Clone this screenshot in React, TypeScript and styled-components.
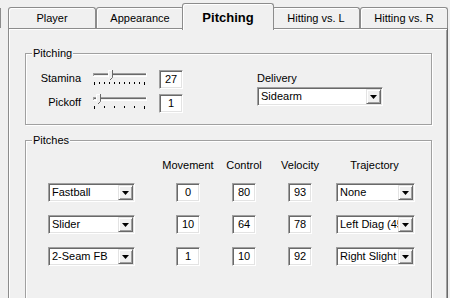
import styled, { createGlobalStyle } from "styled-components";

const GlobalStyle = createGlobalStyle`
  html, body {
    margin: 0;
    padding: 0;
    background: #f0f0f0;
  }
  body {
    font-family: "Liberation Sans", Arial, sans-serif;
    font-size: 11px;
    color: #000;
  }
  * {
    box-sizing: border-box;
  }
`;

const Window = styled.div`
  width: 450px;
  height: 298px;
  overflow: hidden;
  background: #f0f0f0;
`;

const TabStrip = styled.div`
  display: flex;
  align-items: flex-end;
  height: 30px;
`;

const Stub = styled.div`
  flex: none;
  width: 1px;
  height: 20px;
  margin: 0 7px 2px 0;
  background: #8c8c8c;
`;

const Tab = styled.div<{ $active?: boolean }>`
  position: relative;
  z-index: ${(p) => (p.$active ? 2 : 1)};
  flex: none;
  width: ${(p) => (p.$active ? 92 : 88)}px;
  height: ${(p) => (p.$active ? 27 : 21)}px;
  margin: 0 ${(p) => (p.$active ? -2 : 0)}px ${(p) => (p.$active ? 0 : 2)}px;
  padding-top: ${(p) => (p.$active ? 1 : 0)}px;
  display: flex;
  align-items: center;
  justify-content: center;
  border: 1px solid #8c8c8c;
  border-bottom: none;
  border-radius: 3px 3px 0 0;
  box-shadow: inset 1px 1px #fff;
  background: #f0f0f0;
  font-size: ${(p) => (p.$active ? 13 : 11)}px;
  font-weight: ${(p) => (p.$active ? "bold" : "normal")};
  white-space: nowrap;
`;

const Panel = styled.div`
  position: relative;
  z-index: 1;
  width: 440px;
  height: 272px;
  margin: -2px 0 0 8px;
  padding: 18px 15px 0 16px;
  display: flex;
  flex-direction: column;
  gap: 9px;
  border: 1px solid #8c8c8c;
  border-right-color: #696969;
  border-bottom: none;
  box-shadow: inset 1px 1px #fff, inset -1px 0 #a0a0a0;
`;

const Group = styled.fieldset<{ $fill?: boolean }>`
  margin: 0;
  padding: 0;
  min-width: 0;
  flex: ${(p) => (p.$fill ? "1" : "none")};
  border: 1px solid #a0a0a0;
  box-shadow: inset 1px 1px #fff, 1px 1px #fff;
`;

const Legend = styled.legend`
  margin-left: 6px;
  padding: 0 1px;
  line-height: 13px;
  background: #f0f0f0;
`;

const PitchingBody = styled.div`
  display: flex;
  align-items: flex-start;
  gap: 74px;
  padding: 10px 0 11px 0;
`;

const SliderGrid = styled.div`
  display: grid;
  grid-template-columns: 55px 54px 24px;
  grid-auto-rows: 19px;
  column-gap: 12px;
  row-gap: 5px;
  align-items: center;
`;

const SliderLabel = styled.div`
  text-align: right;
  line-height: 13px;
  margin-top: -2px;
`;

const TrackSvg = styled.svg`
  display: block;
  align-self: start;
`;

const NumBox = styled.div`
  width: 24px;
  height: 19px;
  line-height: 15px;
  padding-top: 1px;
  text-align: center;
  background: #fff;
  border: 1px solid;
  border-color: #a0a0a0 #fff #fff #a0a0a0;
  box-shadow: inset 1px 1px #696969, inset -1px -1px #e3e3e3;
`;

const DeliveryBlock = styled.div`
  display: flex;
  flex-direction: column;
  gap: 2px;
  padding-top: 2px;
`;

const FieldLabel = styled.div`
  line-height: 13px;
`;

const ComboBox = styled.div<{ $width: number }>`
  width: ${(p) => p.$width}px;
  height: 19px;
  display: flex;
  padding: 1px;
  background: #fff;
  border: 1px solid;
  border-color: #a0a0a0 #fff #fff #a0a0a0;
  box-shadow: inset 1px 1px #696969, inset -1px -1px #e3e3e3;
`;

const ComboText = styled.div`
  flex: 1;
  min-width: 0;
  padding-left: 2px;
  line-height: 15px;
  white-space: nowrap;
  overflow: hidden;
`;

const DropButton = styled.div`
  flex: none;
  width: 15px;
  height: 15px;
  display: flex;
  align-items: center;
  justify-content: center;
  background: #f0f0f0;
  border: 1px solid;
  border-color: #e3e3e3 #696969 #696969 #e3e3e3;
  box-shadow: inset 1px 1px #fff, inset -1px -1px #a0a0a0;
`;

const PitchTable = styled.div`
  display: flex;
  flex-direction: column;
  gap: 13px;
  padding: 12px 0 0 22px;
`;

const Columns = styled.div`
  display: grid;
  grid-template-columns: 112px 56px 56px 56px 87px;
  align-items: center;
  justify-items: center;
`;

const HeaderRow = styled(Columns)`
  line-height: 13px;
  margin-bottom: -2px;
`;

const TrajHeader = styled.div`
  padding-left: 6px;
`;

const StartCell = styled.div`
  justify-self: start;
`;

const EndCell = styled.div`
  justify-self: end;
`;

const tabs = ["Player", "Appearance", "Pitching", "Hitting vs. L", "Hitting vs. R"];

const pitches = [
  { pitch: "Fastball", movement: 0, control: 80, velocity: 93, trajectory: "None" },
  { pitch: "Slider", movement: 10, control: 64, velocity: 78, trajectory: "Left Diag (45)" },
  { pitch: "2-Seam FB", movement: 1, control: 10, velocity: 92, trajectory: "Right Slight" },
];

function Combo({ value, width }: { value: string; width: number }) {
  return (
    <ComboBox $width={width}>
      <ComboText>{value}</ComboText>
      <DropButton>
        <svg width="7" height="4" viewBox="0 0 7 4">
          <path d="M0 0h7L3.5 4z" fill="#000" />
        </svg>
      </DropButton>
    </ComboBox>
  );
}

function Trackbar({ ticks, thumb }: { ticks: number; thumb: number }) {
  const marks = Array.from({ length: ticks }, (_, i) => Math.round(1 + (i * 50) / (ticks - 1)));
  return (
    <TrackSvg width="54" height="16" viewBox="0 0 54 16">
      <rect x="0" y="3" width="54" height="1" fill="#a0a0a0" />
      <rect x="0" y="3" width="1" height="4" fill="#a0a0a0" />
      <rect x="1" y="4" width="52" height="1" fill="#696969" />
      <rect x="0" y="6" width="54" height="1" fill="#fff" />
      <rect x="53" y="3" width="1" height="4" fill="#fff" />
      {marks.map((x, i) => (
        <rect
          key={i}
          x={x}
          y="12"
          width="1"
          height={i === 0 || i === marks.length - 1 ? 3 : 2}
          fill="#000"
        />
      ))}
      <path
        d={`M${thumb - 2} 0h5v7l-2.5 3l-2.5 -3z`}
        fill="#f0f0f0"
      />
      <path
        d={`M${thumb - 1.5} 7.5V0.5h4`}
        fill="none"
        stroke="#fff"
      />
      <path
        d={`M${thumb + 2.5} 0v7.5l-2.5 2.5`}
        fill="none"
        stroke="#696969"
      />
    </TrackSvg>
  );
}

export default function App() {
  return (
    <>
      <GlobalStyle />
      <Window>
        <TabStrip>
          <Stub />
          {tabs.map((t) => (
            <Tab key={t} $active={t === "Pitching"}>
              {t}
            </Tab>
          ))}
        </TabStrip>
        <Panel>
          <Group>
            <Legend>Pitching</Legend>
            <PitchingBody>
              <SliderGrid>
                <SliderLabel>Stamina</SliderLabel>
                <Trackbar ticks={11} thumb={17} />
                <NumBox>27</NumBox>
                <SliderLabel>Pickoff</SliderLabel>
                <Trackbar ticks={6} thumb={5} />
                <NumBox>1</NumBox>
              </SliderGrid>
              <DeliveryBlock>
                <FieldLabel>Delivery</FieldLabel>
                <Combo value="Sidearm" width={126} />
              </DeliveryBlock>
            </PitchingBody>
          </Group>
          <Group $fill>
            <Legend>Pitches</Legend>
            <PitchTable>
              <HeaderRow>
                <div />
                <div>Movement</div>
                <div>Control</div>
                <div>Velocity</div>
                <TrajHeader>Trajectory</TrajHeader>
              </HeaderRow>
              {pitches.map((p) => (
                <Columns key={p.pitch}>
                  <StartCell>
                    <Combo value={p.pitch} width={87} />
                  </StartCell>
                  <NumBox>{p.movement}</NumBox>
                  <NumBox>{p.control}</NumBox>
                  <NumBox>{p.velocity}</NumBox>
                  <EndCell>
                    <Combo value={p.trajectory} width={79} />
                  </EndCell>
                </Columns>
              ))}
            </PitchTable>
          </Group>
        </Panel>
      </Window>
    </>
  );
}
